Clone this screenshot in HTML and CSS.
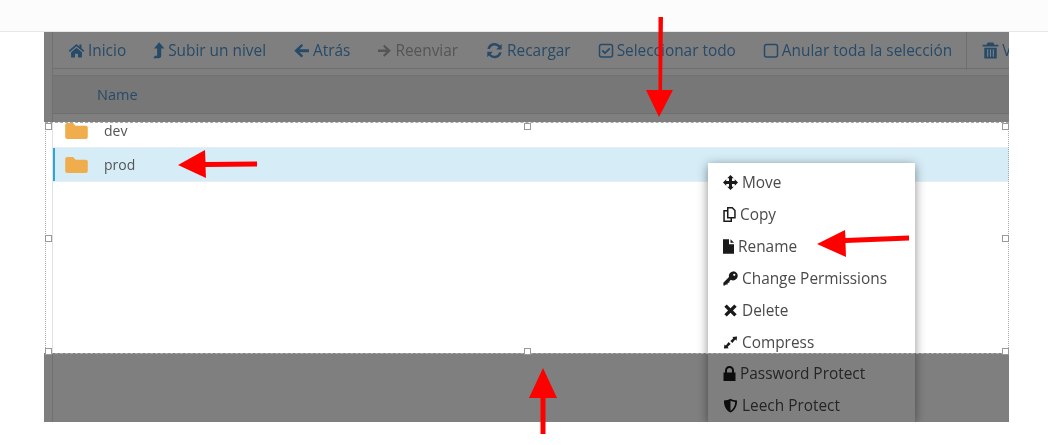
FILE: index.html
```html
<html>
<head>
    <meta charset="UTF-8">
    <meta name="viewport" content="width=device-width, initial-scale=1.0">
    <title>File manager</title>
    <link rel="stylesheet" href="styles.css">
</head>
<body>

<svg class="icon-defs" width="0" height="0">
    <symbol id="i-home" viewBox="0 0 16 16"><path d="M8 1.800 .6 8.200l1 1.100L8 3.900l6.400 5.400 1-1.100-2.700-2.300V2.400h-2v2.100zM2.900 9.600V14.500h3.700v-3.400h2.800v3.400h3.700V9.600L8 5.300z"/></symbol>
    <symbol id="i-up" viewBox="3 0.500 10.500 15"><path d="M8.400 .8 13 6.200H10.200V12.600c0 1.200-.8 2.200-2.100 2.200H3.200L4.600 12.600H6.600V6.200H3.800z"/></symbol>
    <symbol id="i-left" viewBox="0 0 16 16"><path d="M15 6.800H6.200L9.600 3.400 8 1.800 1.200 8.200 8 14.600l1.600-1.600-3.400-3.400H15z"/></symbol>
    <symbol id="i-right" viewBox="0 0 16 16"><path d="M1 6.800H9.800L6.400 3.400 8 1.800 14.800 8.200 8 14.600 6.400 13l3.400-3.400H1z"/></symbol>
    <symbol id="i-refresh" viewBox="0 0 16 16"><path d="M14.800 1.800V7H9.600l2-2A4.600 4.600 0 0 0 3.600 6.600H1.300A6.800 6.800 0 0 1 13.200 3.400zM1.200 14.400V9.200h5.200l-2 2a4.600 4.600 0 0 0 8-1.600h2.300A6.800 6.800 0 0 1 2.800 12.800z"/></symbol>
    <symbol id="i-check" viewBox="0 0 16 16"><rect x="1.500" y="2" width="13" height="12.500" rx="2" fill="none" stroke="currentColor" stroke-width="1.500"/><path d="M4.300 8 7 10.600l4.800-4.800" fill="none" stroke="currentColor" stroke-width="1.800"/></symbol>
    <symbol id="i-square" viewBox="0 0 16 16"><rect x="1.500" y="2" width="13" height="12.500" rx="2" fill="none" stroke="currentColor" stroke-width="1.500"/></symbol>
    <symbol id="i-trash" viewBox="1 0.500 14 15"><path d="M5.500 1h5l1 2H15v1.500H1V3h3.500zM2.500 5.500h11V15h-11zM5 7v6.500h1V7zM7.500 7v6.500h1V7zM10 7v6.500h1V7z" fill-rule="evenodd"/></symbol>
    <symbol id="i-move" viewBox="0 0 16 16"><path d="M8 0 11.500 3.500H9.600V6.400H12.500V4.500L16 8l-3.500 3.500V9.600H9.600V12.500H11.500L8 16 4.500 12.500H6.400V9.600H3.500V11.500L0 8 3.500 4.500V6.400H6.400V3.500H4.500z"/></symbol>
    <symbol id="i-copy" viewBox="1 1 12.500 15"><path d="M5.500 1.800H10l2.700 2.700V11.800H5.500z M5.500 4.800H1.800V15.200H9V11.800" fill="none" stroke="currentColor" stroke-width="1.500"/></symbol>
    <symbol id="i-file" viewBox="2.500 1 11 14.500"><path d="M2.500 1H8.500V6H13.500V15.500H2.500zM10 1l3.500 3.600H10z"/></symbol>
    <symbol id="i-key" viewBox="0 0 16 16"><path d="M10.800 .4a4.800 4.800 0 1 1-2.400 8.900L6.800 10.900V12.600H5v1.800H3L2 15.400H.4V12.400L6.400 6.400A4.800 4.800 0 0 1 10.800 .4zM12 2.800a1 1 0 1 0 0 2.400A1 1 0 0 0 12 2.800z" fill-rule="evenodd"/></symbol>
    <symbol id="i-x" viewBox="0 0 16 16"><path d="M4 1.500 8 5.500l4-4 2.600 2.600-4 3.900 4 4-2.600 2.500-4-4-4 4-2.600-2.500 4-4-4-3.900z"/></symbol>
    <symbol id="i-compress" viewBox="0 0 16 16"><path d="M15 1.500 14.500 6 13 4.800 10 8.500 7.800 6.500 11 3.500 10 2zM1 14.500l.5-4.500L3 11.200 6 7.500 8.200 9.500 5 12.500 6 14z"/></symbol>
    <symbol id="i-lock" viewBox="2 0.500 12 15"><path d="M3.500 7V5a4.500 4.500 0 0 1 9 0V7H14V15.500H2V7zM5.500 7h5V5a2.500 2.500 0 0 0-5 0z" fill-rule="evenodd"/></symbol>
    <symbol id="i-shield" viewBox="0 0 16 16"><path d="M8 .8C10 2 12.500 2.600 15 2.600 15 9 12.500 13.500 8 15.500 3.500 13.500 1 9 1 2.600 3.500 2.600 6 2 8 .8zM8 3V13.500C11 12 12.800 8.800 13 4.300 11.200 4.200 9.500 3.800 8 3z" fill-rule="evenodd"/></symbol>
    <symbol id="i-folder" viewBox="0 0 24 17"><path d="M2 0H8.500L11 2.800H22a2 2 0 0 1 2 2V15a2 2 0 0 1-2 2H2a2 2 0 0 1-2-2V2a2 2 0 0 1 2-2z"/></symbol>
</svg>

<div class="topbar"></div>

<div class="shot">
    <div class="manager">
        <div class="toolbar">
            <a class="tool"><svg class="tool-icon"><use href="#i-home"/></svg>Inicio</a>
            <a class="tool"><svg class="tool-icon narrow"><use href="#i-up"/></svg>Subir un nivel</a>
            <a class="tool"><svg class="tool-icon"><use href="#i-left"/></svg>Atrás</a>
            <a class="tool disabled"><svg class="tool-icon slim"><use href="#i-right"/></svg>Reenviar</a>
            <a class="tool"><svg class="tool-icon wide"><use href="#i-refresh"/></svg>Recargar</a>
            <a class="tool"><svg class="tool-icon mid"><use href="#i-check"/></svg>Seleccionar todo</a>
            <a class="tool"><svg class="tool-icon mid"><use href="#i-square"/></svg>Anular toda la selección</a>
            <a class="tool tool-sep"><svg class="tool-icon"><use href="#i-trash"/></svg>V</a>
        </div>

        <div class="table-head">Name</div>

        <div class="file-row">
            <svg class="folder"><use href="#i-folder"/></svg>
            <span>dev</span>
        </div>
        <div class="file-row selected">
            <svg class="folder"><use href="#i-folder"/></svg>
            <span>prod</span>
        </div>
    </div>

    <ul class="menu">
        <li><svg class="menu-icon"><use href="#i-move"/></svg>Move</li>
        <li><svg class="menu-icon small"><use href="#i-copy"/></svg>Copy</li>
        <li><svg class="menu-icon tiny"><use href="#i-file"/></svg>Rename</li>
        <li><svg class="menu-icon"><use href="#i-key"/></svg>Change Permissions</li>
        <li><svg class="menu-icon"><use href="#i-x"/></svg>Delete</li>
        <li><svg class="menu-icon"><use href="#i-compress"/></svg>Compress</li>
        <li><svg class="menu-icon small"><use href="#i-lock"/></svg>Password Protect</li>
        <li><svg class="menu-icon"><use href="#i-shield"/></svg>Leech Protect</li>
    </ul>

    <div class="dim dim-top"></div>
    <div class="dim dim-bottom"></div>

    <div class="selection">
        <i class="handle tl"></i><i class="handle tc"></i><i class="handle tr"></i>
        <i class="handle ml"></i><i class="handle mr"></i>
        <i class="handle bl"></i><i class="handle bc"></i><i class="handle br"></i>
    </div>
</div>

<svg class="arrows" width="1048" height="445" viewBox="0 0 1048 445">
    <path d="M658.500 17h4.500L662 90h11l-14 27-13-27h12.500z"/>
    <path d="M178 165l27-15 .5 12 51.500-.5v5l-51.500 .5 .5 11z"/>
    <path d="M817 244l28-14 .5 8 63.500-2.500v5l-63.500 2.500 .5 14z"/>
    <path d="M543 368l14 30H545.500V434h-5V398H529z"/>
</svg>

</body>
</html>
```

FILE: styles.css
```css
body {
    margin: 0;
    position: relative;
    height: 445px;
    overflow: hidden;
    background: #fff;
    font-family: "Open Sans", "Liberation Sans", sans-serif;
    font-size: 14px;
    color: #555;
}

.icon-defs {
    position: absolute;
}

.topbar {
    height: 31px;
    background: #fcfcfc;
    border-bottom: 1px solid #e6e6e6;
}

/* the pasted screenshot */
.shot {
    position: relative;
    width: 965px;
    height: 390px;
    margin-left: 44px;
    overflow: hidden;
    background: #fff;
}

.manager {
    height: 100%;
    margin-left: 8px;
    border-left: 1px solid #e2e2e2;
    filter: blur(0.4px);
}

.toolbar {
    display: flex;
    align-items: center;
    gap: 27px;
    height: 36px;
    padding-left: 15px;
    font-size: 15.4px;
    white-space: nowrap;
    border-bottom: 1px solid #ddd;
}

.tool {
    display: flex;
    align-items: center;
    gap: 3px;
    color: #4f94d0;
}

.tool.disabled {
    color: #aaa;
}

.tool-sep {
    position: relative;
    margin-left: 3px;
}

.tool-sep::before {
    content: "";
    position: absolute;
    left: -16px;
    top: -9px;
    bottom: -9px;
    border-left: 1px solid #ddd;
}

.tool-icon {
    width: 17px;
    height: 17px;
    flex: none;
    fill: currentColor;
}

.tool-icon.narrow {
    width: 12px;
}

.tool-icon.slim {
    width: 15px;
}

.tool-icon.mid {
    width: 16px;
}

.tool-icon.wide {
    width: 19px;
}

.table-head {
    height: 37px;
    margin-top: 6px;
    padding-left: 44px;
    line-height: 37px;
    font-size: 14.5px;
    font-weight: 500;
    color: #4f94d0;
    background: #eee;
    border-top: 1px solid #e4e4e4;
    border-bottom: 1px solid #ddd;
}

.file-row {
    display: flex;
    align-items: center;
    gap: 16px;
    height: 33px;
    padding-left: 12px;
    border-bottom: 1px solid #e6eef2;
}

.file-row.selected {
    background: #d6edf8;
    box-shadow: inset 2px 0 0 #2ba6d9;
}

.folder {
    width: 23px;
    height: 16px;
    fill: #f0ad4e;
}

.menu {
    position: absolute;
    left: 664px;
    top: 131px;
    width: 207px;
    margin: 0;
    padding: 4px 0 0;
    list-style: none;
    font-size: 15.4px;
    color: #4a4a4a;
    background: #fff;
    box-shadow: 0 2px 10px rgba(0, 0, 0, 0.45);
    filter: blur(0.4px);
}

.menu li {
    display: flex;
    align-items: center;
    gap: 4px;
    height: 31.85px;
    padding-left: 15px;
    white-space: nowrap;
}

.menu-icon {
    width: 15px;
    height: 15px;
    flex: none;
    fill: #1a1a1a;
    color: #1a1a1a;
}

.menu-icon.small {
    width: 13px;
}

.menu-icon.tiny {
    width: 11px;
}

.dim {
    position: absolute;
    left: 0;
    right: 0;
    background: rgba(0, 0, 0, 0.5);
}

.dim-top {
    top: 0;
    height: 90px;
}

.dim-bottom {
    top: 321px;
    bottom: 0;
}

.selection {
    position: absolute;
    left: 1px;
    top: 90px;
    right: 0;
    height: 230px;
    border-top: 1px dashed #aaa;
    border-bottom: 1px dashed #aaa;
    border-left: 1px dotted #aaa;
    border-right: 1px dotted #aaa;
}

.handle {
    position: absolute;
    width: 5px;
    height: 5px;
    background: #fff;
    border: 1px solid #999;
}

.tl, .tc, .tr { top: 0; }
.ml, .mr { top: 112px; }
.bl, .bc, .br { bottom: -2px; }
.tl, .ml, .bl { left: -1px; }
.tc, .bc { left: 478px; }
.tr, .mr, .br { right: -1px; }

.arrows {
    position: absolute;
    left: 0;
    top: 0;
    fill: #ff0000;
}
```
